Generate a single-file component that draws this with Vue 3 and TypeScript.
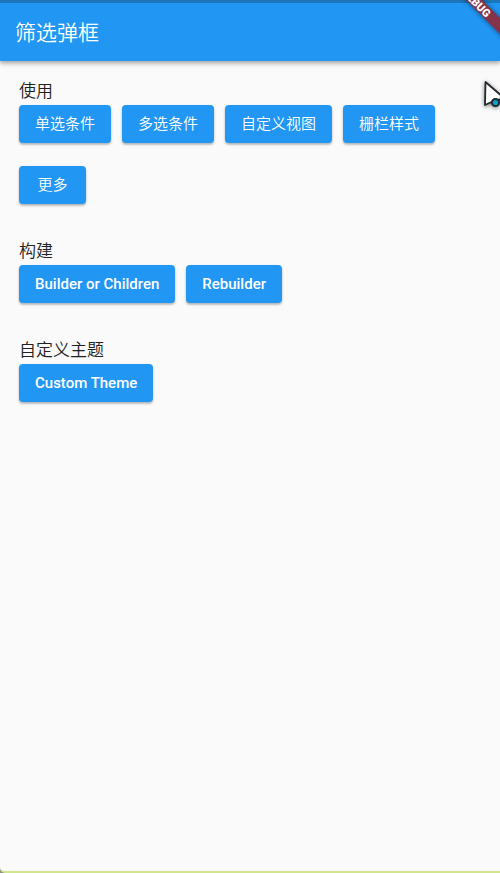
<script setup lang="ts">
interface Section {
  title: string
  actions: string[]
}

const sections: Section[] = [
  { title: '使用', actions: ['单选条件', '多选条件', '自定义视图', '栅栏样式', '更多'] },
  { title: '构建', actions: ['Builder or Children', 'Rebuilder'] },
  { title: '自定义主题', actions: ['Custom Theme'] },
]

const isLatin = (text: string): boolean => /^[\x20-\x7e]+$/.test(text)
</script>

<template>
  <div class="screen">
    <header class="app-bar">
      <h1 class="app-title">筛选弹框</h1>
    </header>

    <main class="content">
      <section v-for="section in sections" :key="section.title" class="section">
        <h2 class="section-title">{{ section.title }}</h2>
        <div class="actions">
          <button
            v-for="action in section.actions"
            :key="action"
            type="button"
            class="action"
            :class="{ latin: isLatin(action) }"
          >
            {{ action }}
          </button>
        </div>
      </section>
    </main>

    <svg class="debug-banner" width="60" height="60" viewBox="0 0 60 60" aria-hidden="true">
      <defs>
        <filter id="banner-shadow" x="-50%" y="-50%" width="200%" height="200%">
          <feGaussianBlur stdDeviation="2.5" />
        </filter>
      </defs>
      <path d="M16 -10 L32 -10 L70 28 V44 Z" fill="#000" opacity="0.5" filter="url(#banner-shadow)" />
      <path d="M16 -10 L32 -10 L70 28 V44 Z" fill="#843349" />
      <text class="debug-text" transform="translate(46 18) rotate(45)" text-anchor="end">DEBUG</text>
    </svg>

    <svg class="pointer" width="20" height="34" viewBox="0 0 20 34" aria-hidden="true">
      <path
        d="M5.5 4 L5 27 L11.5 24 L24 20 Z"
        fill="#fff"
        stroke="#22282d"
        stroke-width="1.8"
        stroke-linejoin="round"
      />
      <circle cx="15.5" cy="24.5" r="3.6" fill="#0a9fd0" stroke="#22282d" stroke-width="2" />
    </svg>
  </div>
</template>

<style>
body {
  margin: 0;
  background: #8c8f88;
}
</style>

<style scoped>
.screen {
  position: relative;
  box-sizing: border-box;
  min-height: 100vh;
  overflow: hidden;
  background: #fafafa;
  border-bottom: 2px solid #d0e58c;
  border-bottom-left-radius: 5px;
  font-family: Roboto, "Noto Sans CJK SC", sans-serif;
}

.app-bar {
  display: flex;
  align-items: center;
  box-sizing: border-box;
  height: 61px;
  padding: 2px 15px 0;
  border-top: 3px solid #1c76b9;
  background: #2196f3;
  box-shadow: 0 2px 4px rgba(0, 0, 0, 0.28), 0 3px 6px rgba(0, 0, 0, 0.1);
}

.app-title {
  margin: 0;
  color: #fff;
  font-size: 21px;
  font-weight: 350;
  line-height: 28px;
}

.content {
  display: flex;
  flex-direction: column;
  gap: 36px;
  padding: 19px;
}

.section-title {
  margin: 0 0 2px;
  color: #212121;
  font-size: 17px;
  font-weight: 350;
  line-height: 23px;
}

.actions {
  display: flex;
  flex-wrap: wrap;
  gap: 23px 11px;
}

.action {
  min-width: 67px;
  height: 38px;
  padding: 0 16px;
  border: 0;
  border-radius: 4px;
  background: #2196f3;
  box-shadow: 0 2px 2px rgba(0, 0, 0, 0.18), 0 1px 3px rgba(0, 0, 0, 0.14);
  color: #fff;
  font-family: inherit;
  font-size: 15px;
  font-weight: 350;
  line-height: 20px;
  cursor: pointer;
}

.latin {
  font-weight: 500;
}

.debug-banner {
  position: absolute;
  top: 0;
  right: 0;
  pointer-events: none;
}

.debug-text {
  fill: #fff;
  font-size: 11px;
  font-weight: 900;
}

.pointer {
  position: absolute;
  top: 78px;
  right: 0;
  filter: drop-shadow(0 1px 2px rgba(0, 0, 0, 0.5));
  pointer-events: none;
}
</style>
